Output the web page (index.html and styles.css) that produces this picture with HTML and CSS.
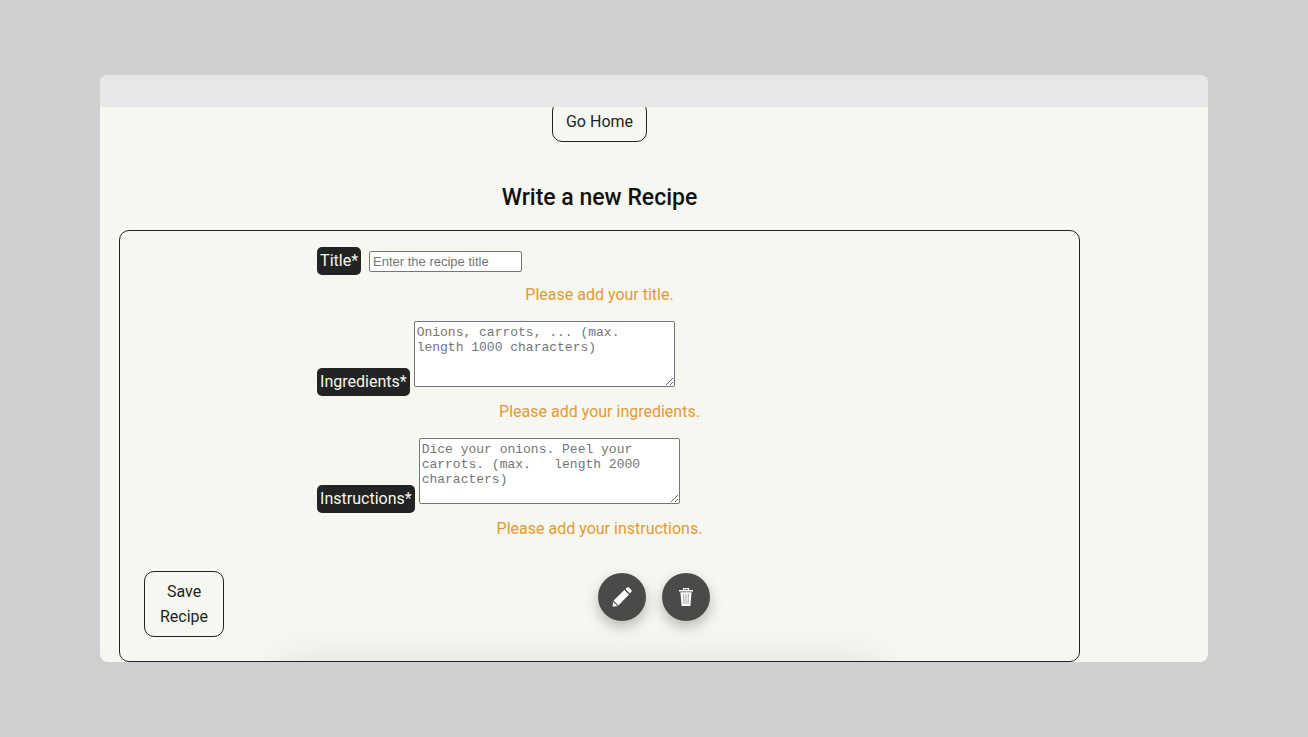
FILE: index.html
```html
<!DOCTYPE html>
<html lang="en">
<head>
<meta charset="utf-8">
<title>Write a new Recipe</title>
<link rel="stylesheet" href="styles.css">
</head>
<body>
<div class="window">
  <div class="window-bar"></div>
  <main class="page">
    <a class="button home" href="#">Go Home</a>
    <h1 class="heading">Write a new Recipe</h1>
    <form class="recipe-form">
      <div class="fields">
        <div class="field field-title">
          <label class="label" for="title">Title*</label>
          <input class="text-input" id="title" type="text" placeholder="Enter the recipe title">
        </div>
        <p class="error">Please add your title.</p>
        <div class="field">
          <label class="label" for="ingredients">Ingredients*</label>
          <textarea class="text-area" id="ingredients" placeholder="Onions, carrots, ... (max. length 1000 characters)"></textarea>
        </div>
        <p class="error">Please add your ingredients.</p>
        <div class="field">
          <label class="label" for="instructions">Instructions*</label>
          <textarea class="text-area" id="instructions" placeholder="Dice your onions. Peel your carrots. (max.   length 2000 characters)"></textarea>
        </div>
        <p class="error">Please add your instructions.</p>
      </div>
      <div class="actions">
        <button class="button save" type="submit">Save Recipe</button>
        <div class="round-actions">
          <button class="round" type="button" aria-label="Edit">
            <svg width="20" height="20" viewBox="0 0 20 20" fill="#fff"><path d="M0.6 19.6 1 14.4 5.6 19.2ZM1.6 13.4 12.4 3 17 7.6 6.4 18.4ZM13.4 2 14.9 0.8Q16.2-.3 17.6 1L19 2.4Q20.3 3.8 19.2 5.1L18 6.6Z"/></svg>
          </button>
          <button class="round" type="button" aria-label="Delete">
            <svg width="14" height="18" viewBox="0 0 14 18"><path d="M4.5 2.5V.6H9.5V2.5" fill="none" stroke="#fff" stroke-width="1.2"/><path d="M0 2H14V3.4H0ZM1.4 4.2H12.6L11.4 18H2.6Z" fill="#fff"/><path d="M4.6 5.5 5 16M7 5.5V16M9.4 5.5 9 16" stroke="#4a4a48" stroke-width=".5"/></svg>
          </button>
        </div>
      </div>
    </form>
  </main>
</div>
</body>
</html>
```
FILE: styles.css
```css
* { box-sizing: border-box; }

body {
  margin: 0;
  padding: 75px 100px;
  background: #d0d0d0;
  color: #222423;
  font: 16px/25px Roboto, sans-serif;
}

.window {
  overflow: hidden;
  border-radius: 8px;
  background: #f6f7f1;
}

.window-bar {
  height: 32px;
  background: #e7e7e7;
}

.page {
  display: flex;
  flex-direction: column;
  align-items: center;
  padding: 0 128px 0 19px;
  overflow: hidden;
}

.button {
  padding: 7px 14px;
  border: 1px solid #222423;
  border-radius: 10px;
  background: transparent;
  color: #222423;
  font: inherit;
  text-align: center;
  text-decoration: none;
}

.home {
  margin-top: -6px;
  padding: 7px 13px;
}

.heading {
  margin: 37px 0 13px;
  color: #111;
  font: 500 23px/38px Roboto, sans-serif;
}

.recipe-form {
  position: relative;
  align-self: stretch;
  overflow: hidden;
  padding: 16px 24px 24px;
  border: 1px solid #222423;
  border-radius: 10px;
}

/* Soft shade cast upward by the panel under the form */
.recipe-form::after {
  content: "";
  position: absolute;
  top: calc(100% + 4px);
  left: 17%;
  right: 21%;
  height: 60px;
  box-shadow: 0 0 40px rgba(0, 0, 0, 0.12);
}

.fields {
  width: 62%;
  margin: 0 auto;
}

.field {
  display: flex;
  align-items: flex-end;
  gap: 4px;
}

.field-title {
  align-items: baseline;
  gap: 8px;
  margin-bottom: 7px;
}

.label {
  padding: 0 3px;
  border-radius: 5px;
  background: #222423;
  color: #f6f7f1;
  line-height: 28px;
}

.text-input {
  width: 153px;
  height: 21px;
  padding: 1px 3px;
  border: 1px solid #767676;
  border-radius: 2px;
  background: #fff;
  font: 13px "Liberation Sans", Arial, sans-serif;
}

.text-area {
  width: 261px;
  height: 66px;
  margin-bottom: 9px;
  padding: 3px 2px;
  border: 1px solid #767676;
  border-radius: 2px;
  background: #fff;
  font: 13px/15px "Liberation Mono", "Courier New", monospace;
}

.text-input::placeholder,
.text-area::placeholder { color: #757575; }

.error {
  margin: 3px 0 14px;
  color: #e39a32;
  text-align: center;
}

.actions {
  display: grid;
  grid-template-columns: 1fr auto 1fr;
  align-items: start;
  margin-top: 30px;
}

.save { width: 80px; }

.round-actions {
  display: flex;
  gap: 16px;
  margin: 2px 0 0 108px;
}

.round {
  display: flex;
  align-items: center;
  justify-content: center;
  width: 48px;
  height: 48px;
  padding: 0;
  border: 0;
  border-radius: 50%;
  background: #4a4a48;
  box-shadow: 0 6px 14px rgba(0, 0, 0, 0.25);
}
```
